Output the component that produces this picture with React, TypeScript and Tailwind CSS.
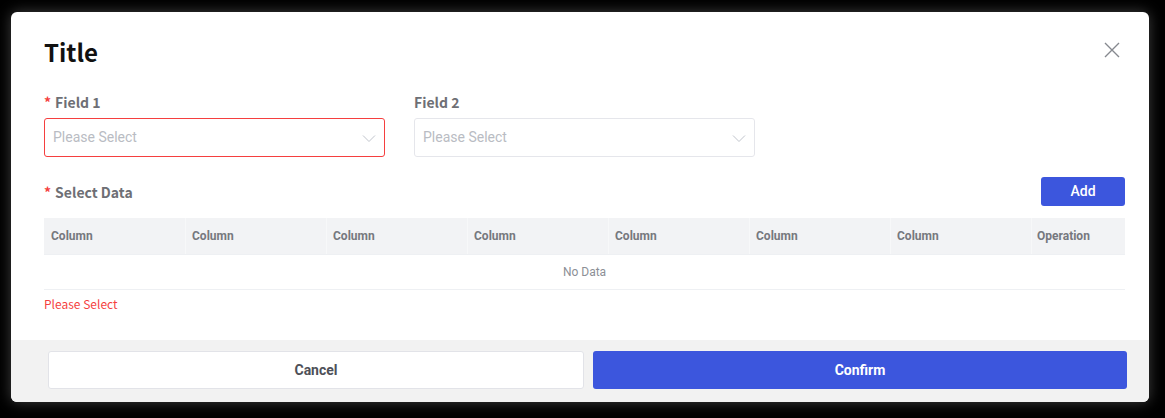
import React from 'react';

const columns = ['Column', 'Column', 'Column', 'Column', 'Column', 'Column', 'Column'];

function Chevron() {
  return (
    <svg width="14" height="14" viewBox="0 0 14 14" fill="none" className="text-[#c0c4cc]">
      <path d="M1 4.5L7 10.5L13 4.5" stroke="currentColor" strokeWidth="1" />
    </svg>
  );
}

function SelectBox({ error }: { error?: boolean }) {
  return (
    <div
      className={
        error
          ? 'flex h-[39px] w-[341px] items-center justify-between rounded-[3px] border border-[#f53f3f] pl-[8px] pr-[8px]'
          : 'flex h-[39px] w-[341px] items-center justify-between rounded-[3px] border border-[#e5e6eb] pl-[8px] pr-[8px]'
      }
    >
      <span className="font-['Roboto',sans-serif] text-[14px] text-[#b9bcc3]">Please Select</span>
      <Chevron />
    </div>
  );
}

function Label({ text, required }: { text: string; required?: boolean }) {
  return (
    <div className="h-[20px] text-[14px] leading-[20px] font-bold text-[#6e6f75]">
      {required && <span className="mr-[4px] text-[#f53f3f]">*</span>}
      {text}
    </div>
  );
}

export default function App() {
  return (
    <div className="h-[418px] w-full bg-black pt-[12px] pl-[11px] font-['Noto_Sans_CJK_SC','Noto_Sans',sans-serif]">
      <div className="flex h-[390px] w-[1138px] flex-col overflow-hidden rounded-[6px] bg-white shadow-[0_0_14px_rgba(255,255,255,0.25)]">
        <div className="flex-1 pt-[24px] pl-[33px] pr-[24px]">
          <div className="flex items-start justify-between">
            <h2 className="text-[24px] leading-[32px] font-bold text-[#111]">Title</h2>
            <button className="mt-[5px] mr-[4px] text-[#86898f]">
              <svg width="18" height="18" viewBox="0 0 18 18" fill="none">
                <path d="M2 2L16 16M16 2L2 16" stroke="currentColor" strokeWidth="1.4" />
              </svg>
            </button>
          </div>

          <div className="mt-[24px] flex gap-[29px]">
            <div className="flex flex-col gap-[6px]">
              <Label text="Field 1" required />
              <SelectBox error />
            </div>
            <div className="flex flex-col gap-[6px]">
              <Label text="Field 2" />
              <SelectBox />
            </div>
          </div>

          <div className="mt-[20px] flex items-center justify-between">
            <Label text="Select Data" required />
            <button className="h-[29px] w-[84px] rounded-[3px] bg-[#3c56dd] font-['Roboto',sans-serif] text-[14px] font-medium text-white">
              Add
            </button>
          </div>

          <div className="mt-[12px]">
            <div className="grid h-[36px] grid-cols-[repeat(7,141px)_1fr] bg-[#f2f3f5] font-['Roboto',sans-serif] text-[12px] font-bold text-[#76787e]">
              {columns.map((c, i) => (
                <div
                  key={i}
                  className={
                    i === 0
                      ? 'flex items-center pl-[7px]'
                      : 'flex items-center border-l border-[#f7f8f9] pl-[6px]'
                  }
                >
                  {c}
                </div>
              ))}
              <div className="flex items-center border-l border-[#f7f8f9] pl-[5px]">Operation</div>
            </div>
            <div className="flex h-[36px] items-center justify-center border-y border-[#eef0f3] font-['Roboto',sans-serif] text-[12px] text-[#8c8f96]">
              No Data
            </div>
          </div>

          <div className="mt-[6px] text-[12px] leading-[16px] text-[#f53f3f]">Please Select</div>
        </div>

        <div className="flex h-[62px] gap-[9px] bg-[#f2f2f2] pt-[11px] pl-[37px] pr-[22px]">
          <button className="h-[38px] flex-1 rounded-[3px] border border-[#e2e3e8] bg-white font-['Roboto',sans-serif] text-[14px] font-bold text-[#4e5058]">
            Cancel
          </button>
          <button className="h-[38px] flex-1 rounded-[3px] bg-[#3c56dd] font-['Roboto',sans-serif] text-[14px] font-bold text-white">
            Confirm
          </button>
        </div>
      </div>
    </div>
  );
}
